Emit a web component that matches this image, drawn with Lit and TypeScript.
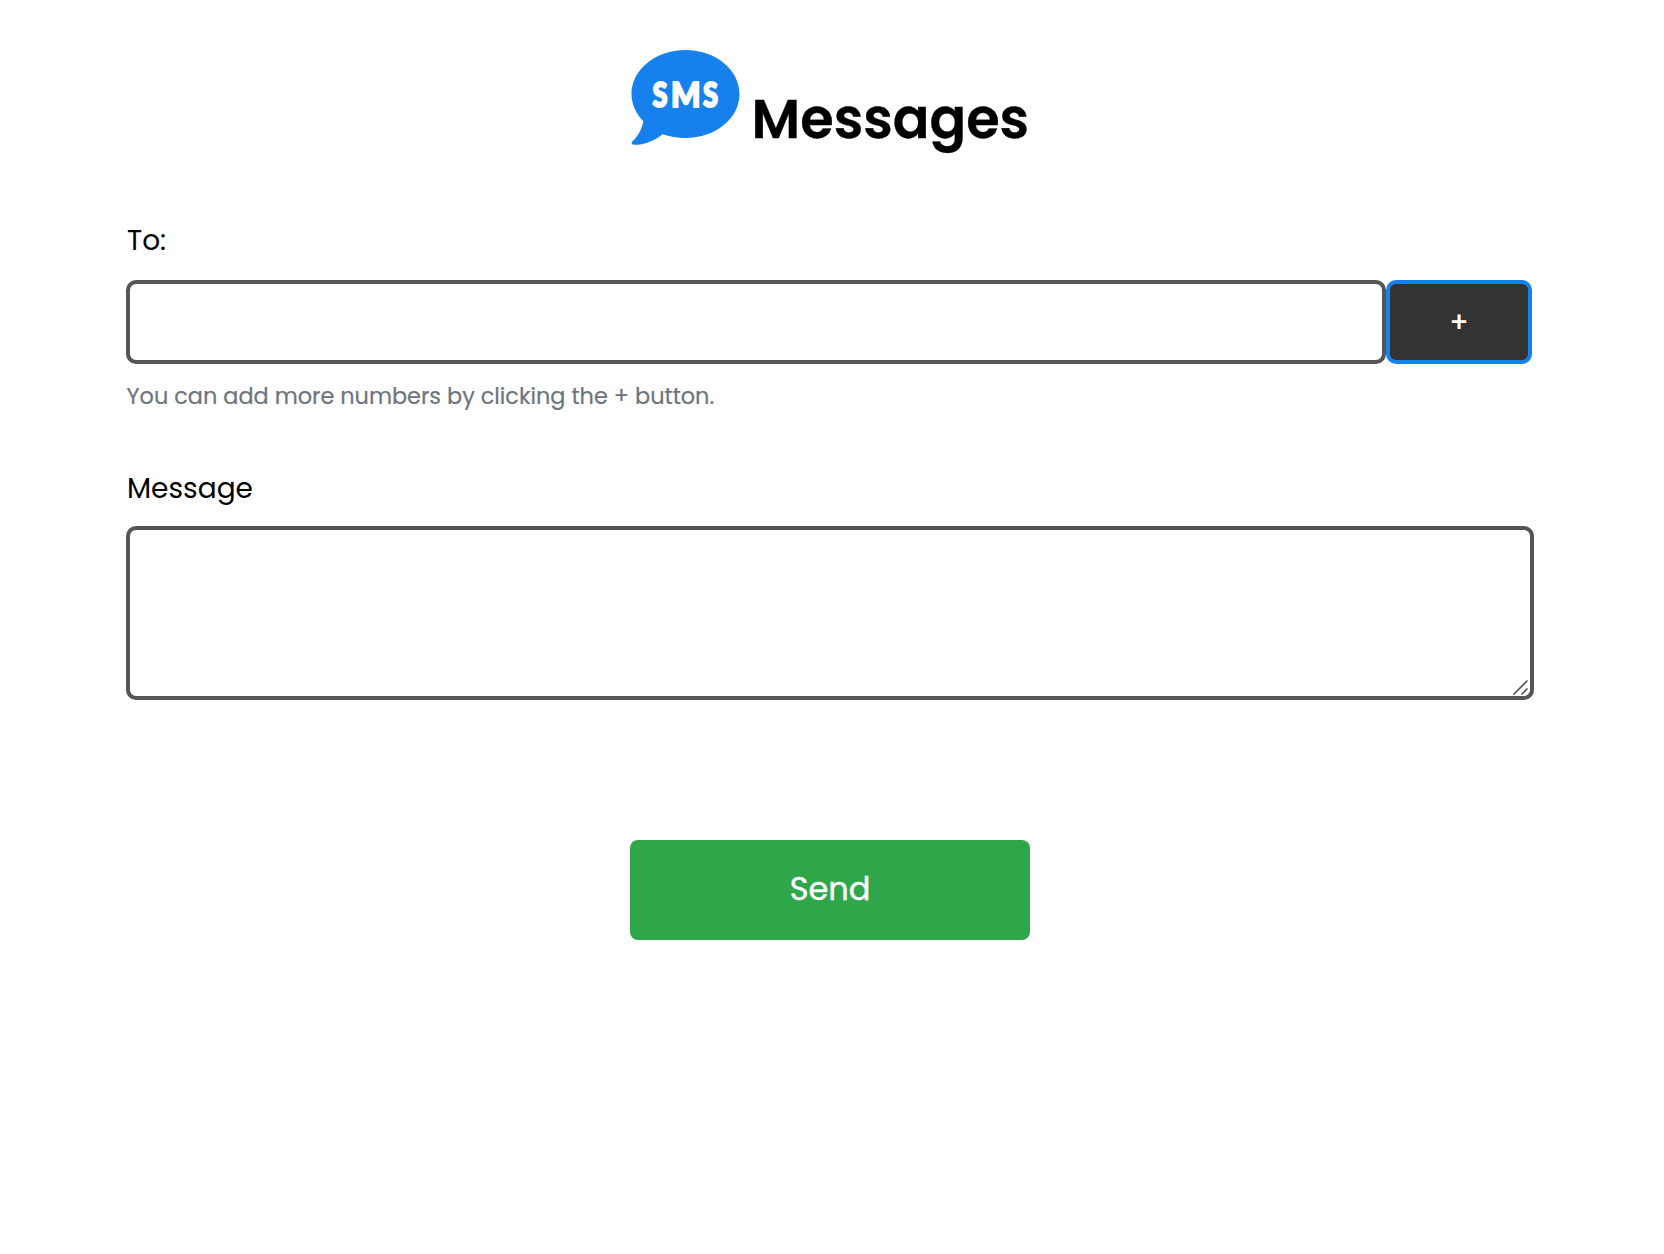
import { LitElement, html, css } from "lit";
import { customElement } from "lit/decorators.js";

@customElement("app-root")
export class AppRoot extends LitElement {
  static styles = css`
    :host {
      display: block;
      min-height: 1254px;
      box-sizing: border-box;
      padding: 49px 130px 0 126px;
      background: #fff;
      color: #000;
      font-family: Poppins, Inter, "Liberation Sans", sans-serif;
      font-feature-settings: "cv11";
    }
    * {
      box-sizing: border-box;
    }
    .header {
      display: flex;
      justify-content: center;
      height: 112px;
      margin-right: 2px;
    }
    .logo {
      width: 110px;
      height: 98px;
      flex: none;
    }
    .logo text {
      font-family: Lato, sans-serif;
      font-weight: 900;
      font-size: 34.5px;
      fill: #fff;
      stroke: #fff;
      stroke-width: 2px;
      stroke-linejoin: round;
    }
    .title {
      margin: 34px 0 0 11px;
      width: 276px;
      font-size: 54.2px;
      line-height: 72px;
      font-weight: 600;
      white-space: nowrap;
      -webkit-text-stroke: 0.3px #000;
    }
    .form {
      display: flex;
      flex-direction: column;
    }
    .label {
      font-size: 28px;
      line-height: 42px;
      height: 40px;
      padding-left: 1px;
      white-space: nowrap;
    }
    .to {
      margin-top: 59px;
    }
    .row {
      display: flex;
      margin-top: 20px;
      height: 84px;
    }
    .number {
      width: 1260px;
      height: 84px;
      margin: 0;
      padding: 0 20px;
      border: 4px solid #555;
      border-radius: 10px;
      background: #fff;
      outline: none;
      font: inherit;
      font-size: 28px;
    }
    .add {
      width: 146px;
      height: 84px;
      padding: 2px 0 0;
      border: 4px solid #1681ed;
      border-radius: 10px;
      background: #333;
      color: #fff;
      font: inherit;
      font-size: 28px;
      font-weight: 500;
    }
    .hint {
      margin-top: 16px;
      height: 32px;
      padding-left: 0.5px;
      line-height: 33px;
      font-size: 22.4px;
      color: #6c757d;
      white-space: nowrap;
      -webkit-text-stroke: 0.2px #6c757d;
    }
    .msg {
      margin-top: 56px;
    }
    .message {
      margin: 18px 0 0;
      width: 1408px;
      height: 174px;
      padding: 16px 20px;
      border: 4px solid #555;
      border-radius: 10px;
      background: #fff;
      outline: none;
      resize: none;
      font: inherit;
      font-size: 28px;
    }
    .area {
      display: block;
      position: relative;
      height: 192px;
    }
    .grip {
      position: absolute;
      right: 5px;
      bottom: 4px;
      width: 18px;
      height: 17px;
    }
    .send {
      align-self: center;
      width: 400px;
      height: 100px;
      margin: 140px 0 0 0;
      padding: 0 0 2px;
      border: 0;
      border-radius: 8px;
      background: #2fa64a;
      color: #fff;
      font: inherit;
      font-size: 32px;
      -webkit-text-stroke: 0.4px #fff;
    }
  `;

  render() {
    return html`
      <header class="header">
        <svg class="logo" viewBox="631 49 110 98" aria-label="SMS">
          <path
            fill="#1681ed"
            d="M685.5 50C715.5 50 739.5 69.7 739.5 94S715.5 138 685.5 138C677 138 669.5 136.600 662.700 134.200C654 141 644 145 633.500 144.800C631.500 144.700 631 142.600 632.500 141.300C638 136 642 129 643.300 121.200C636 113.500 631.500 104.300 631.500 94C631.500 69.700 655.500 50 685.500 50Z"
          />
          <text x="652.500" y="106.600" textLength="15" lengthAdjust="spacingAndGlyphs">S</text>
          <text x="671" y="106.600" textLength="29.500" lengthAdjust="spacingAndGlyphs">M</text>
          <text x="703" y="106.600" textLength="15" lengthAdjust="spacingAndGlyphs">S</text>
        </svg>
        <h1 class="title">Messages</h1>
      </header>
      <div class="form">
        <label class="label to" for="number">To:</label>
        <div class="row">
          <input class="number" id="number" type="text" />
          <button class="add" type="button">+</button>
        </div>
        <div class="hint">You can add more numbers by clicking the + button.</div>
        <label class="label msg" for="message">Message</label>
        <div class="area">
          <textarea class="message" id="message"></textarea>
          <svg class="grip" viewBox="0 0 18 17">
            <path d="M2.500 15.500L16.500 1.500M10.500 15.500L16.500 9.500" stroke="#555" stroke-width="1.600" />
          </svg>
        </div>
        <button class="send" type="button">Send</button>
      </div>
    `;
  }
}
